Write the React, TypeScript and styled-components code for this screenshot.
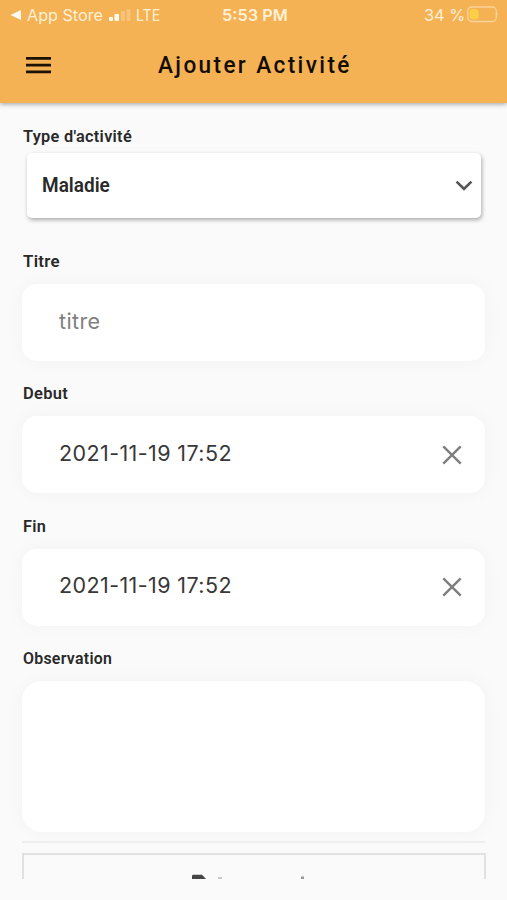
import React from "react";
import styled, { createGlobalStyle } from "styled-components";

const Global = createGlobalStyle`
  *, *::before, *::after { box-sizing: border-box; }
  body { margin: 0; background: #fafafa; }
`;

const Screen = styled.div`
  width: 507px;
  height: 900px;
  overflow: hidden;
  display: flex;
  flex-direction: column;
  background: #fafafa;
  color: #292929;
  font-family: Roboto, "Liberation Sans", sans-serif;
`;

const Header = styled.header`
  flex: none;
  position: relative;
  height: 103px;
  background: #f4b254;
  box-shadow: 0 1px 5px rgba(0, 0, 0, 0.38);
`;

const StatusBar = styled.div`
  height: 30px;
  padding: 0 8px 0 10px;
  display: grid;
  grid-template-columns: 1fr auto 1fr;
  align-items: center;
  font: 500 16px/30px Inter, sans-serif;
  color: #fff0d6;
`;

const StatusGroup = styled.div<{ $end?: boolean }>`
  display: flex;
  align-items: center;
  justify-content: ${(p) => (p.$end ? "flex-end" : "flex-start")};
`;

const StatusText = styled.span<{ $width: number; $scale?: number; $bold?: boolean }>`
  display: block;
  width: ${(p) => p.$width}px;
  white-space: nowrap;
  font-weight: ${(p) => (p.$bold ? 600 : 400)};
  transform: scaleX(${(p) => p.$scale ?? 1});
  transform-origin: left center;
`;

const TitleBar = styled.div`
  height: 70px;
  padding: 0 26px;
  display: grid;
  grid-template-columns: 132px 1fr;
  align-items: center;
`;

const MenuButton = styled.button`
  display: flex;
  width: 26px;
  padding: 0;
  border: 0;
  background: none;
`;

const Title = styled.h1`
  margin: 0;
  font: 500 24.5px/30px Roboto, sans-serif;
  letter-spacing: 2.6px;
  color: #120c04;
  white-space: nowrap;
  transform: scaleX(0.92);
  transform-origin: left center;
`;

const Form = styled.main`
  height: 776px;
  flex: none;
  overflow: hidden;
  padding: 23px 22px 0;
  display: flex;
  flex-direction: column;
`;

const Label = styled.label<{ $scale?: number }>`
  flex: none;
  height: 22px;
  padding-left: 1px;
  font-size: 17px;
  font-weight: 600;
  line-height: 21px;
  letter-spacing: 0.3px;
  white-space: nowrap;
  transform: scaleX(${(p) => p.$scale ?? 0.96});
  transform-origin: left center;
`;

const SelectBox = styled.div`
  flex: none;
  height: 65px;
  margin: 5px 4px 33px 5px;
  padding: 0 8px 0 15px;
  display: flex;
  align-items: center;
  justify-content: space-between;
  background: #fff;
  border-radius: 5px;
  box-shadow: 1px 2px 4px rgba(0, 0, 0, 0.32);
`;

const SelectValue = styled.span`
  font-size: 20px;
  font-weight: 600;
  line-height: 24px;
  transform: translateY(-1px) scaleX(0.95);
  transform-origin: left center;
`;

const Field = styled.div<{ $tall?: boolean }>`
  flex: none;
  height: ${(p) => (p.$tall ? 151 : 77)}px;
  margin: ${(p) => (p.$tall ? "11px 0 9px" : "11px 0 22.33px")};
  padding: 0 23px 0 37px;
  display: flex;
  align-items: center;
  justify-content: space-between;
  background: #fff;
  border-radius: ${(p) => (p.$tall ? 20 : 15)}px;
  box-shadow: 0 0 20px rgba(0, 0, 0, 0.035);
`;

const FieldText = styled.span<{ $muted?: boolean }>`
  font: 400 21.5px/26px Inter, sans-serif;
  letter-spacing: 0.4px;
  color: ${(p) => (p.$muted ? "#808080" : "#383838")};
  transform: translateY(-2px);
  white-space: nowrap;
`;

const Divider = styled.hr`
  flex: none;
  width: 100%;
  height: 2px;
  margin: 0 0 10px;
  border: 0;
  background: #eeeeee;
`;

const OutlineButton = styled.button`
  flex: none;
  height: 60px;
  width: 464px;
  padding: 19px 0 0 166px;
  display: flex;
  align-items: flex-start;
  border: 2px solid #e1e1e1;
  background: #fafafa;
`;

const Cross = () => (
  <svg width="20" height="20" viewBox="0 0 20 20" fill="none" stroke="#7e7e7e" strokeWidth="2.4">
    <path d="M1.3 1.3 18.7 18.7M18.7 1.3 1.3 18.7" />
  </svg>
);

const DateField = ({ value }: { value: string }) => (
  <Field>
    <FieldText>{value}</FieldText>
    <Cross />
  </Field>
);

export default function App() {
  return (
    <>
      <Global />
      <Screen>
        <Header>
          <StatusBar>
            <StatusGroup>
              <svg width="17" height="12" viewBox="0 0 17 12">
                <path d="M0.5 6 11 1v10z" fill="#fffaf0" />
              </svg>
              <StatusText $width={81} $scale={1.01}>App Store</StatusText>
              <svg width="28" height="14" viewBox="0 0 28 14">
                <rect x="1" y="9" width="4" height="4" rx="1" fill="#fffaf0" />
                <rect x="6.5" y="6" width="4.5" height="7" rx="1" fill="#fffaf0" />
                <rect x="13" y="3" width="4" height="10" rx="1" fill="#f7c27a" />
                <rect x="18.5" y="1" width="4" height="12" rx="1" fill="#f7c27a" />
              </svg>
              <StatusText $width={26} $scale={0.88}>LTE</StatusText>
            </StatusGroup>
            <StatusText $width={66} $scale={1.02} $bold>5:53 PM</StatusText>
            <StatusGroup $end>
              <StatusText $width={43} $scale={1.02}>34 %</StatusText>
              <svg width="32" height="18" viewBox="0 0 32 18">
                <rect x="0.8" y="1" width="28.5" height="14.5" rx="4" fill="none" stroke="#fad49a" strokeWidth="1.3" />
                <rect x="2.7" y="3" width="9" height="10.5" rx="3.5" fill="#fbd047" />
                <path d="M30.5 6q1.5 2.2 0 4.5z" fill="#fad49a" />
              </svg>
            </StatusGroup>
          </StatusBar>
          <TitleBar>
            <MenuButton aria-label="Menu">
              <svg width="26" height="18" viewBox="0 0 26 18" fill="#1b1206">
                <path d="M0 1h25v2.8H0zM0 7.7h25v2.8H0zM0 14.4h25v2.8H0z" />
              </svg>
            </MenuButton>
            <Title>Ajouter Activité</Title>
          </TitleBar>
        </Header>
        <Form>
          <Label>Type d'activité</Label>
          <SelectBox>
            <SelectValue>Maladie</SelectValue>
            <svg width="18" height="12" viewBox="0 0 18 12" fill="none" stroke="#555" strokeWidth="2.7">
              <path d="m1.6 1.6 7.4 7.3 7.4-7.3" />
            </svg>
          </SelectBox>
          <Label $scale={0.99}>Titre</Label>
          <Field><FieldText $muted>titre</FieldText></Field>
          <Label $scale={0.97}>Debut</Label>
          <DateField value="2021-11-19 17:52" />
          <Label>Fin</Label>
          <DateField value="2021-11-19 17:52" />
          <Label $scale={0.935}>Observation</Label>
          <Field $tall />
          <Divider />
          <OutlineButton aria-label="Action">
            <svg width="120" height="14" viewBox="0 0 120 14">
              <path d="M2 5V2q0-1.2 1.5-1.2H12L16 5z" fill="#454545" />
              <rect x="28" y="3" width="4" height="2" fill="#c8c8c8" />
              <rect x="111" y="2.5" width="3" height="2.5" fill="#999" />
            </svg>
          </OutlineButton>
        </Form>
      </Screen>
    </>
  );
}
